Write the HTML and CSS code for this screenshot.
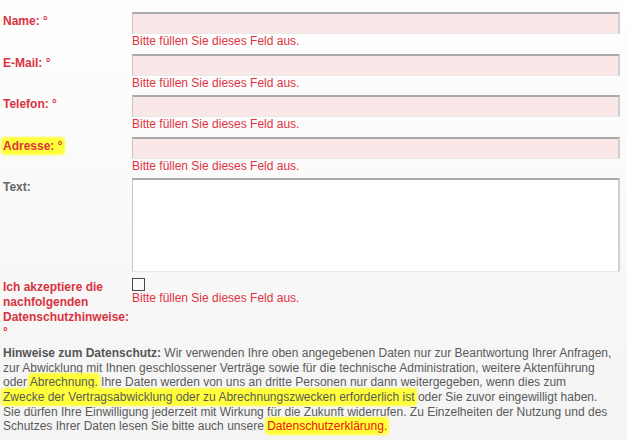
FILE: index.html
```html
<!DOCTYPE html>
<html lang="de">
<head>
  <meta charset="UTF-8" />
  <title>Kontakt</title>
  <link rel="stylesheet" href="styles.css">
</head>
<body>

  <form id="contact-form" class="contact-form">
    <div class="form-row">
      <label for="name">Name: °</label>
      <div class="field">
        <input type="text" id="name" class="invalid" />
        <span class="error">Bitte füllen Sie dieses Feld aus.</span>
      </div>
    </div>

    <div class="form-row">
      <label for="email">E-Mail: °</label>
      <div class="field">
        <input type="text" id="email" class="invalid" />
        <span class="error">Bitte füllen Sie dieses Feld aus.</span>
      </div>
    </div>

    <div class="form-row">
      <label for="phone">Telefon: °</label>
      <div class="field">
        <input type="text" id="phone" class="invalid" />
        <span class="error">Bitte füllen Sie dieses Feld aus.</span>
      </div>
    </div>

    <div class="form-row">
      <label for="address"><span class="marker">Adresse: °</span></label>
      <div class="field">
        <input type="text" id="address" class="invalid" />
        <span class="error">Bitte füllen Sie dieses Feld aus.</span>
      </div>
    </div>

    <div class="form-row">
      <label for="message" class="optional">Text:</label>
      <div class="field">
        <textarea id="message"></textarea>
      </div>
    </div>

    <div class="form-row consent-row">
      <label for="consent">Ich akzeptiere die nachfolgenden Datenschutzhinweise: °</label>
      <div class="field">
        <input type="checkbox" id="consent" />
        <span class="error">Bitte füllen Sie dieses Feld aus.</span>
      </div>
    </div>
  </form>

  <p class="privacy">
    <strong>Hinweise zum Datenschutz:</strong> Wir verwenden Ihre oben angegebenen Daten nur zur Beantwortung Ihrer Anfragen,<br>
    zur Abwicklung mit Ihnen geschlossener Verträge sowie für die technische Administration, weitere Aktenführung<br>
    oder <span class="marker">Abrechnung.</span> Ihre Daten werden von uns an dritte Personen nur dann weitergegeben, wenn dies zum<br>
    <span class="marker">Zwecke der Vertragsabwicklung oder zu Abrechnungszwecken erforderlich ist</span> oder Sie zuvor eingewilligt haben.<br>
    Sie dürfen Ihre Einwilligung jederzeit mit Wirkung für die Zukunft widerrufen. Zu Einzelheiten der Nutzung und des<br>
    Schutzes Ihrer Daten lesen Sie bitte auch unsere <a href="#" class="marker">Datenschutzerklärung.</a>
  </p>

</body>
</html>
```

FILE: styles.css
```css
body {
  margin: 0;
  padding: 12px 7px 0 3px;
  font-family: "Liberation Sans", Arial, sans-serif;
  font-size: 12px;
  background: linear-gradient(#fefefe, #f4f4f4);
  min-height: 440px;
  box-sizing: border-box;
}

.contact-form {
  display: flex;
  flex-direction: column;
  gap: 5.6px;
}

.form-row {
  display: grid;
  grid-template-columns: 129px 1fr;
}

.form-row label {
  padding-top: 2px;
  font-weight: bold;
  color: #d9333f;
  line-height: 15px;
}

.form-row label.optional {
  color: #666;
}

.field {
  display: flex;
  flex-direction: column;
  align-items: flex-start;
}

.field input[type="text"],
.field textarea {
  width: 100%;
  box-sizing: border-box;
  margin: 0;
  height: 22px;
  border-style: solid;
  border-width: 2px 2px 1px 1px;
  border-color: #a9a9a9 #d0d0d0 #e8e8e8 #c4c4c4;
  background: #fff;
}

.field input.invalid {
  background: #fae8e8;
}

.field textarea {
  height: 94px;
  resize: none;
}

.error {
  color: #e0333f;
  line-height: 14px;
}

.consent-row label {
  padding-right: 8px;
}

.field input[type="checkbox"] {
  appearance: none;
  margin: 0;
  width: 13px;
  height: 13px;
  border: 1px solid #4a4a4a;
  background: #fcfcfc;
}

.privacy {
  margin: 6px 0 0;
  color: #5a5a5a;
  line-height: 14.7px;
}

.privacy strong {
  color: #555;
}

.marker {
  background: #ffff3a;
  box-shadow: 0 0 2px 2px #ffff3a;
  border-radius: 2px;
}

.privacy a {
  color: #ee1111;
  text-decoration: none;
}
```
